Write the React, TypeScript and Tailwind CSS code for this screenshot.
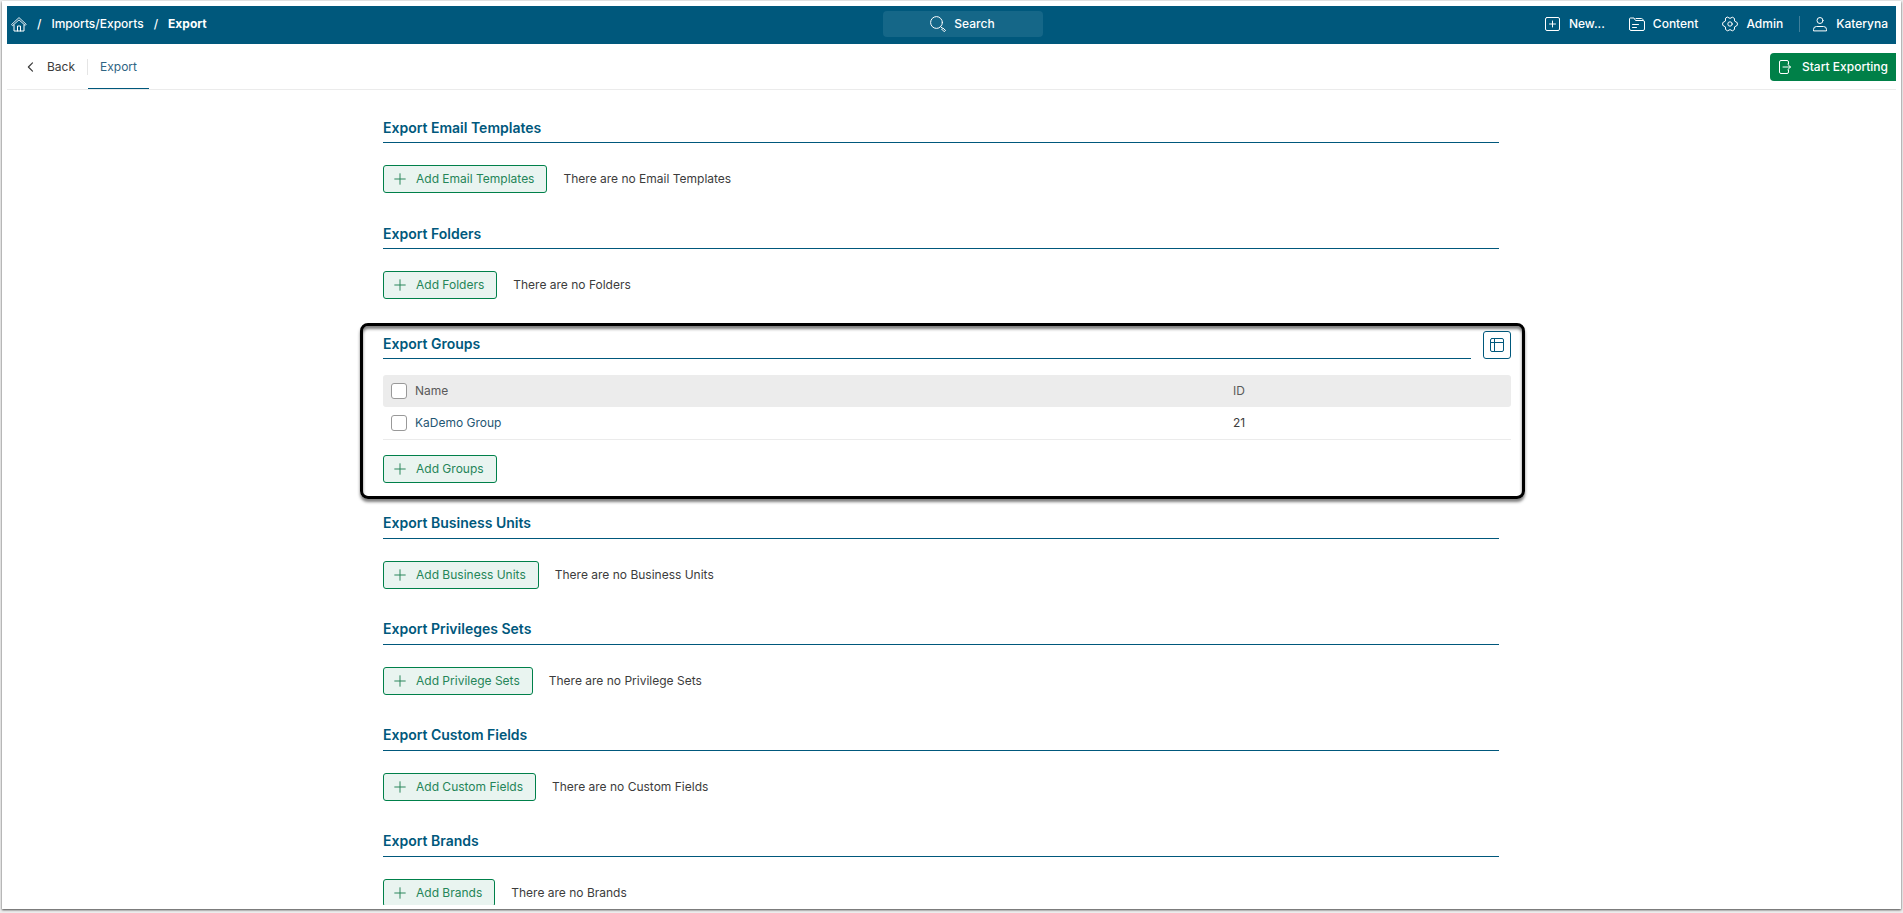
import type { ReactNode } from 'react'

type IconProps = { children: ReactNode, className?: string }

const Icon = ({ children, className = 'w-4 h-4' }: IconProps) => (
  <svg
    viewBox="0 0 16 16"
    fill="none"
    stroke="currentColor"
    strokeLinecap="round"
    strokeLinejoin="round"
    className={ `shrink-0 ${className}` }
    aria-hidden="true"
  >
    { children }
  </svg>
)

const HomeIcon = () => (
  <Icon>
    <path d="M.8 8.300 8 1.600l7.200 6.700-1 1.100L8 3.900 1.800 9.400z" strokeWidth=".9" />
    <path d="M3 9v6h10V9" />
    <path d="M6.500 15V10h3v5" />
  </Icon>
)

const SearchIcon = () => (
  <Icon>
    <circle cx="6.500" cy="6.500" r="5.900" />
    <path d="m10.800 10.800 1.200 1.200" />
    <path d="m11.900 12.800.9-.9 2.700 2.500-1 1z" />
  </Icon>
)

const NewIcon = () => (
  <Icon>
    <rect x=".5" y="1.500" width="14" height="13" rx="1.500" />
    <path d="M7.500 5v6M4.500 8h6" />
  </Icon>
)

const ContentIcon = () => (
  <Icon>
    <path d="M.5 13V3q0-1 1-1h3.500l1.500 2.500H14q1.500 0 1.500 1.500v7q0 1.500-1.500 1.500H2Q.5 14.500.5 13z" />
    <path d="M7 2.500h5.500q1 0 1.500 1" />
    <path d="M3.500 8.500h6M3.500 11.500h4" />
  </Icon>
)

const GearIcon = () => (
  <Icon>
    <circle cx="8" cy="8" r="2.200" />
    <path d="M5.600 1.200 8 2.400l2.400-1.200 2 1.200.2 2.700 2.700 1.600v2.600l-2.700 1.600-.2 2.700-2 1.200L8 13.600l-2.400 1.200-2-1.200-.2-2.700L.7 9.300V6.700l2.700-1.600.2-2.700z" />
  </Icon>
)

const UserIcon = () => (
  <Icon>
    <circle cx="8" cy="4.500" r="3" />
    <path d="M1.500 14.500v-1q0-3 3-3h7q3 0 3 3v1z" />
  </Icon>
)

const ExportIcon = () => (
  <Icon>
    <path d="M10.500 5V3q0-1.500-1.500-1.500H3Q1.500 1.500 1.500 3v10q0 1.500 1.500 1.500h6q1.500 0 1.500-1.500v-2" />
    <path d="M5 8h7.500M9.800 5.400 12.500 8l-2.700 2.600" />
  </Icon>
)

const PlusIcon = () => (
  <Icon className="w-3 h-3">
    <path d="M8 1v14M1 8h14" strokeWidth="1.300" />
  </Icon>
)

const TableIcon = () => (
  <Icon>
    <rect x="1.500" y="1.500" width="13" height="13" rx="1.500" />
    <path d="M1.500 5.500h13M5.500 1.500v13" />
  </Icon>
)

const navItems = [
  { title: 'New...', icon: <NewIcon /> },
  { title: 'Content', icon: <ContentIcon /> },
  { title: 'Admin', icon: <GearIcon /> },
]

const groups = [{ id: 21, name: 'KaDemo Group' }]

const Header = () => (
  <header className="grid grid-cols-[1fr_auto_1fr] items-center h-[38px] pb-[2px] shrink-0 bg-[#00587c] text-white font-medium">
    <nav className="flex items-center gap-[10px] pl-1" aria-label="Breadcrumb">
      <a href="#home" aria-label="Home"><HomeIcon /></a>
      <span>/</span>
      <a href="#imports">Imports/Exports</a>
      <span>/</span>
      <span className="font-bold">Export</span>
    </nav>

    <div className="pl-[22px]">
      <button className="flex items-center justify-center gap-2 w-40 h-[26px] rounded-sm bg-[#156788]">
        <SearchIcon />
        Search
      </button>
    </div>

    <nav className="flex items-center justify-end gap-6 pr-2" aria-label="Main">
      {navItems.map(item =>
        <a key={ item.title } href="#nav" className="flex items-center gap-2">
          { item.icon }
          { item.title }
        </a>
      )}
      <a href="#user" className="flex items-center gap-2 h-4 pl-3 -ml-2 border-l border-[#3f7f9b]">
        <UserIcon />
        Kateryna
      </a>
    </nav>
  </header>
)

const Toolbar = () => (
  <div className="flex items-center justify-between h-[46px] shrink-0 border-b border-[#ebebeb]">
    <div className="flex items-center h-full">
      <a href="#back" className="flex items-center gap-[10px] h-4 pl-[18px] pr-3 border-r border-[#e5e5e5]">
        <Icon className="w-3 h-3">
          <path d="M10 2.500 4.500 8l5.500 5.500" strokeWidth="1.600" />
        </Icon>
        Back
      </a>
      <a href="#export" className="flex items-center h-full px-3 pt-px border-b border-[#00587c] text-[#2f6583]">Export</a>
    </div>
    <button className="flex items-center gap-2 h-7 px-2 rounded-l-sm bg-[#008048] text-white font-medium">
      <ExportIcon />
      Start Exporting
    </button>
  </div>
)

const AddButton = ({ title }: { title: string }) => (
  <button className="flex items-center gap-[10px] h-7 pl-[10px] pr-3 border border-[#00804a] rounded-[3px] bg-[#e9f4f0] text-[#258558]">
    <PlusIcon />
    Add { title }
  </button>
)

const SectionTitle = ({ children }: { children: ReactNode }) => (
  <h2 className="flex items-center grow h-7 pb-[2px] border-b border-[#00587c] text-sm font-semibold text-[#00587c]">
    { children }
  </h2>
)

const EmptySection = ({ title, item = title }: { title: string, item?: string }) => (
  <section className="pr-3">
    <SectionTitle>Export { title }</SectionTitle>
    <div className="flex items-center gap-4 mt-[22px]">
      <AddButton title={ item } />
      <p>There are no { item }</p>
    </div>
  </section>
)

const Checkbox = ({ label }: { label: string }) => (
  <input
    type="checkbox"
    aria-label={ label }
    className="block w-4 h-4 ml-2 appearance-none border border-[#999] rounded-[3px] bg-white checked:bg-[#00587c]"
  />
)

const GroupsSection = () => (
  <section className="relative mt-1">
    <div className="flex gap-3">
      <SectionTitle>Export Groups</SectionTitle>
      <button
        aria-label="Columns"
        className="flex items-center justify-center w-7 h-7 border border-[#00587c] rounded-[3px] text-[#00587c]"
      >
        <TableIcon />
      </button>
    </div>

    <table className="w-full mt-4 mb-[15px] table-fixed text-left">
      <thead>
        <tr className="h-8 text-[#5a5a5a]">
          <th className="w-8 rounded-l-[3px] bg-[#ececec]"><Checkbox label="Select all" /></th>
          <th className="bg-[#ececec] font-normal">Name</th>
          <th className="w-1/4 pl-1 rounded-r-[3px] bg-[#ececec] font-normal">ID</th>
        </tr>
      </thead>
      <tbody>
        {groups.map(group =>
          <tr key={ group.id } className="h-8 border-b border-[#ebebeb]">
            <td><Checkbox label={ group.name } /></td>
            <td><a href="#group" className="text-[#1f5673]">{ group.name }</a></td>
            <td className="pl-1">{ group.id }</td>
          </tr>
        )}
      </tbody>
    </table>

    <AddButton title="Groups" />

    {/* Highlight frame */}
    <div className="absolute -top-2 -bottom-4 -left-[23px] -right-[14px] border-3 border-black rounded-lg pointer-events-none shadow-[0_3px_3px_rgba(0,0,0,0.5),inset_0_3px_3px_rgba(0,0,0,0.5)]" />
  </section>
)

const App = () => (
  <div className="h-screen px-[2px] pt-px pb-1 bg-[#ededed] font-['Inter',sans-serif] text-xs text-[#3c3c3c]">
    <div className="flex flex-col h-full px-[5px] pt-[5px] pb-1 bg-white shadow-[0_1px_2px_rgba(0,0,0,0.7)]">
      <Header />
      <Toolbar />
      <main className="grow min-h-0 overflow-hidden pt-[25px] pr-[9px]">
        <div className="flex flex-col gap-7 max-w-[1128px] mx-auto">
          <EmptySection title="Email Templates" />
          <EmptySection title="Folders" />
          <GroupsSection />
          <EmptySection title="Business Units" />
          <EmptySection title="Privileges Sets" item="Privilege Sets" />
          <EmptySection title="Custom Fields" />
          <EmptySection title="Brands" />
        </div>
      </main>
    </div>
  </div>
)

export default App
